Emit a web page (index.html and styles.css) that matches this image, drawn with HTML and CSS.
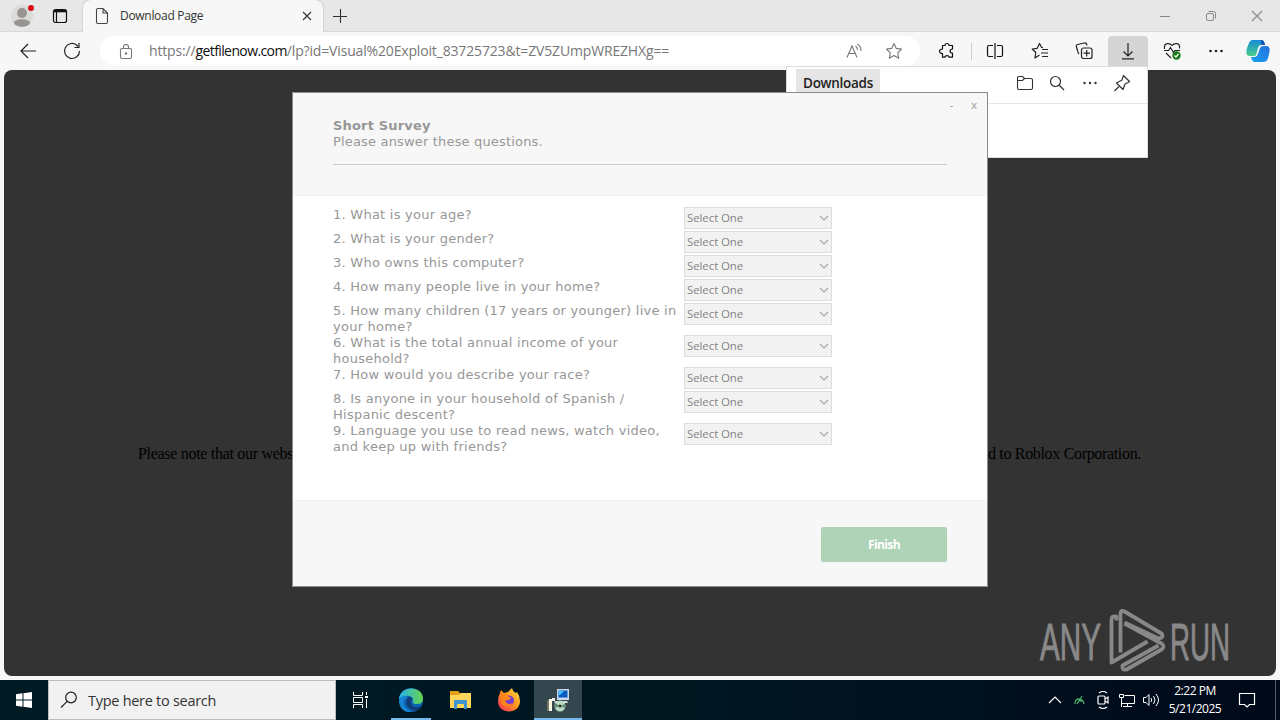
FILE: index.html
```html
<!DOCTYPE html>
<html lang="en">
<head>
<meta charset="utf-8">
<title>Download Page</title>
<link rel="stylesheet" href="styles.css">
</head>
<body>
<div class="screen">
  <header class="tabbar">
    <div class="profile"><svg width="26" height="26" viewBox="0 0 26 26"><circle cx="12" cy="13" r="11" fill="#dcdad8"/><circle cx="12" cy="10" r="5" fill="#979593"/><path d="M4 20c0-5 16-5 16 0-2 5-14 5-16 0z" fill="#979593"/><circle cx="21" cy="5" r="3" fill="#d80b18"/></svg></div>
    <div class="workspace"><svg width="16" height="16" viewBox="0 0 16 16" fill="none" stroke="#111" stroke-width="1.2"><rect x="1.5" y="1.5" width="13" height="13" rx="2"/><path d="M2 3h12" stroke-width="2.6"/><path d="M4.500 4v10"/></svg></div>
    <div class="tab">
      <svg width="14" height="18" viewBox="0 0 14 18" fill="none" stroke="#444" stroke-width="1.1"><path d="M1.5 3q0-1.5 1.5-1.5h5L12.500 6v9q0 1.500-1.500 1.500H3Q1.500 16.500 1.500 15zM8 1.500V6h4.500"/></svg>
      <span class="tab-title">Download Page</span>
      <svg class="tab-close" width="10" height="10" viewBox="0 0 10 10" stroke="#333" stroke-width="1.1"><path d="M1 1l8 8M9 1L1 9"/></svg>
    </div>
    <div class="newtab"><svg width="14" height="14" viewBox="0 0 14 14" stroke="#333" stroke-width="1.1"><path d="M0 7.500h14M7.500 0v14"/></svg></div>
    <div class="winbtns">
      <span><svg width="12" height="12" viewBox="0 0 12 12" fill="none" stroke="#888"><path d="M1 6.500h10"/></svg></span>
      <span><svg width="12" height="12" viewBox="0 0 12 12" fill="none" stroke="#888"><rect x="1.500" y="3.500" width="7" height="7" rx="1.500"/><path d="M3.500 1.500h5q2 0 2 2v5"/></svg></span>
      <span><svg width="12" height="12" viewBox="0 0 12 12" fill="none" stroke="#888" stroke-width="1.1"><path d="M1 1l10 10M11 1L1 11"/></svg></span>
    </div>
  </header>

  <nav class="toolbar">
    <div class="navbtn"><svg width="18" height="16" viewBox="0 0 18 16" fill="none" stroke="#222" stroke-width="1.2"><path d="M17 8H2M9 1L2 8l7 7"/></svg></div>
    <div class="navbtn"><svg width="18" height="18" viewBox="0 0 18 18" fill="none" stroke="#222" stroke-width="1.200"><path d="M16.500 9A7.500 7.500 0 1 1 13.500 3l1.500 1.500M16 1v4.500h-4.500"/></svg></div>
    <div class="address">
      <svg width="14" height="17" viewBox="0 0 14 17" fill="none" stroke="#777" stroke-width="1.1"><rect x="1.500" y="5.500" width="11" height="10" rx="1.500"/><path d="M4.500 5V4a2.500 2.500 0 0 1 5 0v1"/><circle cx="7" cy="10.500" r=".7" fill="#777"/></svg>
      <span class="url"><span>https://</span><b>getfilenow.com</b><span>/lp?id=Visual%20Exploit_83725723&amp;t=ZV5ZUmpWREZHXg==</span></span>
      <svg class="aloud" width="18" height="16" viewBox="0 0 18 16" fill="none" stroke="#777" stroke-width="1.1"><path d="M2 14.500L7 3l5 11.500M4 10.500h6M10.500 3q2 1.500 2 4M12.500 1q3.500 2.500 3.500 7"/></svg>
      <svg width="18" height="18" viewBox="0 0 18 18" fill="none" stroke="#777" stroke-width="1.1" stroke-linejoin="round"><path d="M9 1.500l2.300 4.900 5.200.7-3.800 3.700 1 5.400L9 13.600l-4.700 2.600 1-5.400L1.500 7.100l5.200-.7z"/></svg>
    </div>
    <div class="tool first"><svg width="18" height="18" viewBox="0 0 18 18" fill="none" stroke="#111" stroke-width="1.200" stroke-linejoin="round"><path d="M4.500 3.500h2.500c0-2.700 4-2.700 4 0h3.500V7c-3.200 0-3.200 4.200 0 4.200v4H11c0-2-4-2-4 0H4.500V11.500c-4 0-4-4.500 0-4.500z"/></svg></div>
    <i class="divider"></i>
    <div class="tool split"><svg width="18" height="16" viewBox="0 0 18 16" fill="none" stroke="#111" stroke-width="1.2"><path d="M7 2.500H3q-1.500 0-1.500 1.500v8q0 1.500 1.500 1.500h4M11 2.500h4q1.500 0 1.500 1.500v8q0 1.500-1.500 1.500h-4M9 0v16"/></svg></div>
    <div class="tool fav"><svg width="18" height="18" viewBox="0 0 18 18" fill="none" stroke="#222" stroke-width="1.200" stroke-linejoin="round"><path d="M12 5.500l-1.500-.2L8.500 1.500 6.200 6.300l-5 .7 3.600 3.500-.9 5.500L8.500 13M11 7.500h6M10 11h7M11 14.500h6"/></svg></div>
    <div class="tool"><svg width="18" height="18" viewBox="0 0 18 18" fill="none" stroke="#222" stroke-width="1.200"><path d="M4 12q-1-1-1.500-3.500L1.300 4.500Q1 3 2.500 2.500L9.500 1q1.500-.2 2 1l.5 1.500"/><rect x="6.500" y="6" width="10.500" height="10.500" rx="2"/><path d="M8.500 11.200h6.500M11.700 8v6.500"/></svg></div>
    <div class="tool active"><svg width="14" height="17" viewBox="0 0 14 17" fill="none" stroke="#222" stroke-width="1.200"><path d="M7 0v13M2.500 8.500L7 13l4.500-4.500M1 15.800h12"/></svg></div>
    <div class="tool"><svg width="18" height="18" viewBox="0 0 18 18" fill="none" stroke="#222" stroke-width="1.200"><path d="M1.500 7C.5 0 7 1 9 3.500 11 1 17.500 0 16.500 6.500M1 8.500h4.500l2-3 3 5 1.500-2h5M3 11l5 5"/><circle cx="13.500" cy="13.500" r="4.200" fill="#187b18" stroke="none"/><path d="M11.500 13.500l1.500 1.500 2.500-3" stroke="#fff"/></svg></div>
    <div class="tool"><svg width="14" height="4" viewBox="0 0 14 4" fill="#222"><circle cx="1.500" cy="2" r="1.300"/><circle cx="7" cy="2" r="1.300"/><circle cx="12.500" cy="2" r="1.300"/></svg></div>
    <div class="copilot"><svg width="24" height="24" viewBox="0 0 24 24"><defs><linearGradient id="ca" x1="0" y1="0" x2="0" y2="1"><stop offset="0" stop-color="#168bd8"/><stop offset="1" stop-color="#48cf8b"/></linearGradient><linearGradient id="cb" x1="1" y1="0" x2="0" y2="1"><stop offset="0" stop-color="#2870df"/><stop offset="1" stop-color="#13a1ef"/></linearGradient></defs><path d="M7 1h9q2 0 3 5h-4q-2 0-3 3l-2 7q-.5 1-2 1H3Q-1 16 1 9l2-5q1-3 4-3z" fill="url(#ca)"/><path d="M15 1q3 0 4 5h-4z" fill="#1455bc"/><path d="M17 7h4q4 1 2 8l-1 4q-1 4-5 4H9q-3 0-4-5h4q2 0 3-3l2-6q1-2 3-2z" fill="url(#cb)"/></svg></div>
  </nav>

  <main class="page">
    <div class="notice"><span class="notice-start">Please note that our webs</span><span class="notice-end">d to Roblox Corporation.</span></div>
    <svg class="watermark" width="200" height="68" viewBox="0 0 200 68" fill="none">
      <g class="brand"><text x="3" y="52" textLength="61" lengthAdjust="spacingAndGlyphs">ANY</text><text x="133" y="52" textLength="60" lengthAdjust="spacingAndGlyphs">RUN</text></g>
      <g stroke="#888" stroke-width="3.800" stroke-linejoin="round" transform="translate(-.5 -1.500)"><path d="M80 14V10q-5-1-5 3v43l36-21"/><path d="M84 46V7q0-4 4-2l37 22q3 4-3 5L88 16"/><path d="M88 17l37 20q4 3 0 6L90 63q-5 1-4-4l36-20"/></g>
    </svg>
  </main>

  <footer class="taskbar">
    <div class="start"><svg width="16" height="16" viewBox="0 0 16 16" fill="#fff"><path d="M0 2.200L6.500 1.300v6.200H0zM7.500 1.200L16 0v7.500H7.500zM0 8.500h6.500v6.200L0 13.800zM7.500 8.500H16V16l-8.500-1.200z"/></svg></div>
    <div class="search"><svg width="18" height="18" viewBox="0 0 18 18" fill="none" stroke="#222" stroke-width="1.200"><circle cx="11" cy="6.500" r="5.300"/><path d="M7.200 10.300L1 16.500"/></svg><span>Type here to search</span></div>
    <div class="app"><svg width="17" height="16" viewBox="0 0 17 16" fill="none" stroke="#fff"><path d="M1.500 0v3.500h9V0M1.500 16v-3.500h9V16M1.500 5.500v5h9v-5zM14.500 0v3M14.500 7v9"/><path d="M13 5h3" stroke-width="2"/></svg></div>
    <div class="app running"><svg width="26" height="26" viewBox="0 0 26 26"><defs><linearGradient id="eg"><stop offset="0" stop-color="#26afe9"/><stop offset="1" stop-color="#65d64c"/></linearGradient></defs><circle cx="13" cy="13" r="12" fill="#0c65b5"/><path d="M1 13C1-2 25-2 25 12q0 5-6 5-5 0-4-3 1-4-4-5Q4 8 1 13z" fill="url(#eg)"/><path d="M10 10q-5 9 4 13 4 2 8-2 2-2 1-2-8 3-10-3-.5-2 1-4-1-3-4-2z" fill="#123e78"/><path d="M10 10q-7 3-3 10 3 4 7 5Q2 26 1 14q3-7 9-4z" fill="#1685d3"/></svg></div>
    <div class="app"><svg width="22" height="20" viewBox="0 0 22 20"><path d="M0 1h8l2 2h11v15H0z" fill="#e4a019"/><path d="M0 5h9l2-2h10v15H0z" fill="#ffd65b"/><path d="M4 19v-8q0-1 1-1h11q1 0 1 1v8h-3v-4q0-1-1-1H8q-1 0-1 1v4z" fill="#3f94cf"/></svg></div>
    <div class="app firefox"><svg width="24" height="24" viewBox="0 0 24 24"><defs><linearGradient id="fx" x1="1" y1="0" x2="0" y2="1"><stop offset="0" stop-color="#ffe34c"/><stop offset=".45" stop-color="#ff9a1d"/><stop offset="1" stop-color="#ff265b"/></linearGradient></defs><path d="M3 5l1-3 3 3 4-1 4-4q1 4 4 5l1-1q3 4 3 9c0 14-22 14-22 0q0-4 2-8z" fill="url(#fx)"/><circle cx="12" cy="12.500" r="5" fill="#763bd0"/><path d="M4 7q5-3 7 1l3 2q-2 3-6 2 2 6 8 3-6 7-12 0z" fill="#ff861b"/></svg></div>
    <div class="app running selected"><svg width="24" height="24" viewBox="0 0 24 24"><path d="M11 1h12v11H11z" fill="#c8d8eb"/><path d="M12.500 2.500h9v7h-9z" fill="#085ac0"/><path d="M13 3h5l-4 4h-1z" fill="#3fc5ff"/><path d="M9 13h12l1 2H8z" fill="#d7d7d7"/><path d="M3 11h3v12H3z" fill="#f7f5df"/><path d="M1 12h2v11H1z" fill="#777666"/><path d="M6 10h3v3H6z" fill="#eee"/><circle cx="14" cy="18" r="5.500" fill="#b7dac4"/><path d="M14 18l-5-3v5zM14 18l5-2v4z" fill="#668e79"/><circle cx="14" cy="18" r="1.500" fill="#333"/></svg></div>
    <div class="tray">
      <span><svg width="14" height="8" viewBox="0 0 14 8" fill="none" stroke="#fff" stroke-width="1.200"><path d="M1 7l6-6 6 6"/></svg></span>
      <span><svg width="12" height="12" viewBox="0 0 12 12" fill="none" stroke="#48a967" stroke-width="1.300"><path d="M2 10q0-5 4-5t5 5M4 10l5-8M6 7h3"/></svg></span>
      <span><svg width="14" height="18" viewBox="0 0 14 18" fill="none" stroke="#fff" stroke-width="1.200"><rect x="2" y="5" width="7" height="8" rx="1"/><path d="M9 8l3-2v6l-3-2M3 2q4-3 8 0M3 16q4 3 8 0"/></svg></span>
      <span><svg width="18" height="16" viewBox="0 0 18 16" fill="none" stroke="#fff"><path d="M6.500 3.500h10v8h-13v-4M5 14.500h9M9.500 11.500v3M1.500 2.500h4v3h-4zM3.500 5v10"/></svg></span>
      <span><svg width="18" height="16" viewBox="0 0 18 16" fill="none" stroke="#fff"><path d="M1.500 5.500h2.500l3-3v11l-3-3H1.500zM9 6q1.500 2 0 4M11.500 4q3 4 0 8M14 2q5 6 0 12"/></svg></span>
      <div class="clock"><span>2:22 PM</span><span>5/21/2025</span></div>
      <div class="action"><svg width="18" height="18" viewBox="0 0 18 18" fill="none" stroke="#fff" stroke-width="1.200"><path d="M1.500 2.500h15v11h-5L9 16l-2.500-2.500h-5z"/></svg></div>
      <i class="peek"></i>
    </div>
  </footer>

  <aside class="downloads">
    <div class="dl-head"><span class="dl-title">Downloads</span>
      <div class="dl-icons">
        <span><svg width="18" height="16" viewBox="0 0 18 16" fill="none" stroke="#333" stroke-width="1.100"><path d="M1.500 3q0-1.500 1.500-1.500h3.500L8.500 3.500H15q1.500 0 1.500 1.500v8q0 1.500-1.500 1.500H3q-1.500 0-1.500-1.500zM1.500 5.500h5l2-2"/></svg></span>
        <span><svg width="16" height="16" viewBox="0 0 16 16" fill="none" stroke="#333" stroke-width="1.200"><circle cx="6.500" cy="6.500" r="5"/><path d="M10 10l5 5"/></svg></span>
        <span><svg width="14" height="4" viewBox="0 0 14 4" fill="#333"><circle cx="1.500" cy="2" r="1.200"/><circle cx="7" cy="2" r="1.200"/><circle cx="12.500" cy="2" r="1.200"/></svg></span>
        <span><svg width="18" height="18" viewBox="0 0 18 18" fill="none" stroke="#333" stroke-width="1.200" stroke-linejoin="round"><path d="M10.500 1.500l6 6-1.500 1-3 1.500-2 5.500L3.500 9 9 6l1-3zM6.500 12l-5 5"/></svg></span>
      </div>
    </div>
  </aside>

  <section class="dialog">
    <div class="dialog-head">
      <div class="dialog-ctl"><span>-</span><span>x</span></div>
      <div class="dialog-intro"><h1>Short Survey</h1><p>Please answer these questions.</p></div>
    </div>
    <div class="questions">
      <div class="row"><p>1. What is your age?</p><div class="select">Select One<svg class="chev" viewBox="0 0 10 6"><path d="M1 1l4 4 4-4"/></svg></div></div>
      <div class="row"><p>2. What is your gender?</p><div class="select">Select One<svg class="chev" viewBox="0 0 10 6"><path d="M1 1l4 4 4-4"/></svg></div></div>
      <div class="row"><p>3. Who owns this computer?</p><div class="select">Select One<svg class="chev" viewBox="0 0 10 6"><path d="M1 1l4 4 4-4"/></svg></div></div>
      <div class="row"><p>4. How many people live in your home?</p><div class="select">Select One<svg class="chev" viewBox="0 0 10 6"><path d="M1 1l4 4 4-4"/></svg></div></div>
      <div class="row"><p>5. How many children (17 years or younger) live in<br>your home?</p><div class="select">Select One<svg class="chev" viewBox="0 0 10 6"><path d="M1 1l4 4 4-4"/></svg></div></div>
      <div class="row"><p>6. What is the total annual income of your<br>household?</p><div class="select">Select One<svg class="chev" viewBox="0 0 10 6"><path d="M1 1l4 4 4-4"/></svg></div></div>
      <div class="row"><p>7. How would you describe your race?</p><div class="select">Select One<svg class="chev" viewBox="0 0 10 6"><path d="M1 1l4 4 4-4"/></svg></div></div>
      <div class="row"><p>8. Is anyone in your household of Spanish /<br>Hispanic descent?</p><div class="select">Select One<svg class="chev" viewBox="0 0 10 6"><path d="M1 1l4 4 4-4"/></svg></div></div>
      <div class="row"><p>9. Language you use to read news, watch video,<br>and keep up with friends?</p><div class="select">Select One<svg class="chev" viewBox="0 0 10 6"><path d="M1 1l4 4 4-4"/></svg></div></div>
    </div>
    <div class="dialog-foot"><button class="finish">Finish</button></div>
  </section>
</div>
</body>
</html>
```

FILE: styles.css
```css
* { box-sizing: border-box; }
body { margin: 0; font-family: "Open Sans", "Noto Sans", sans-serif; }
h1, p { margin: 0; }
svg { display: block; flex: none; }
.screen { position: relative; width: 1280px; height: 720px; overflow: hidden; display: flex; flex-direction: column; background: #f7f7f7; }

.tabbar { height: 32px; display: flex; background: #e7e7e7; border-bottom: 1px solid #d9d9d9; }
.profile { width: 44px; padding: 3px 0 0 10px; }
.workspace { width: 32px; display: flex; align-items: center; justify-content: center; }
.tab { width: 240px; height: 32px; margin-left: 7px; padding: 0 11px 0 12px; display: flex; align-items: center; background: #f7f7f7; border-radius: 8px 8px 0 0; box-shadow: 0 0 2px #aaa; clip-path: inset(0 -3px 0 -3px); }
.tab-title { margin-left: 11px; font-size: 12px; line-height: 16px; color: #333; white-space: nowrap; letter-spacing: -0.3px; }
.tab-close { margin-left: auto; }
.newtab { width: 34px; display: flex; align-items: center; justify-content: center; }
.winbtns { margin-left: auto; display: flex; }
.winbtns span { width: 46px; display: flex; align-items: center; justify-content: center; }

.toolbar { height: 38px; display: flex; align-items: center; padding-left: 6px; }
.navbtn { width: 44px; display: flex; justify-content: center; }
.address { width: 820px; height: 30px; margin-left: 6px; padding: 0 17px 0 19px; display: flex; align-items: center; background: #fff; border-radius: 15px; }
.url { margin-left: 16px; font-size: 14px; line-height: 20px; color: #777; white-space: nowrap; letter-spacing: -0.16px; }
.url b { color: #111; font-weight: 400; letter-spacing: -0.6px; }
.aloud { margin-left: auto; margin-right: 22px; }
.tool { width: 40px; height: 30px; margin-right: 4px; display: flex; align-items: center; justify-content: center; }
.first { margin-left: 7px; }
.divider { width: 1px; height: 17px; background: #ccc; margin-right: 3px; }
.split { margin-right: 5px; }
.active { background: #d5d5d5; border-radius: 4px 4px 0 0; }
.copilot { width: 40px; margin-left: -2px; display: flex; justify-content: center; }

.page { height: 606px; margin: 0 4px; background: #333; border-radius: 8px; display: flex; flex-direction: column; justify-content: space-between; }
.notice { display: flex; justify-content: space-between; padding: 374px 135px 0 134px; font: 16px/20px "Liberation Serif", serif; color: #000; white-space: nowrap; }
.notice-start { letter-spacing: -0.3px; }
.notice-end { letter-spacing: -0.33px; }
.watermark { margin: 0 39px 0 auto; overflow: visible; }
.brand text { font: 51px "Liberation Sans", sans-serif; fill: #888; stroke: #888; stroke-width: 1px; }

.taskbar { height: 40px; margin-top: 4px; display: flex; background: linear-gradient(90deg, #001b24, #001620 55%, #00091a); color: #fff; }
.start { width: 48px; display: flex; align-items: center; justify-content: center; }
.search { width: 288px; display: flex; align-items: center; padding-left: 11px; background: #f1f1f1; border: 1px solid #bdbdbd; color: #333; font-size: 14.500px; white-space: nowrap; }
.search span { margin-left: 10px; letter-spacing: -0.28px; }
.app { width: 49px; display: flex; align-items: center; justify-content: center; }
.app:nth-of-type(3) { width: 48px; }
.running { width: 40px; margin: 0 5px 0 7px; border-bottom: 2px solid #76b9ed; padding-top: 2px; }
.selected { width: 48px; margin: 0; background: #34464e; }
.firefox { padding-right: 2px; }
.tray { margin-left: auto; display: flex; align-items: center; }
.tray > span { width: 24px; display: flex; justify-content: center; }
.clock { width: 64px; display: flex; flex-direction: column; align-items: center; font-size: 12px; line-height: 18px; letter-spacing: -0.48px; }
.action { width: 40px; display: flex; justify-content: center; }
.peek { width: 1px; height: 40px; margin: 0 4px 0 8px; background: #56606b; }

.downloads { position: absolute; left: 786px; top: 66px; width: 362px; height: 92px; background: #fff; border: 1px solid #ddd; }
.dl-head { height: 37px; display: flex; justify-content: space-between; padding: 2px 9px 0; border-bottom: 1px solid #e5e5e5; }
.dl-title { width: 84px; height: 28px; background: #e5e5e5; text-align: center; font-size: 13.500px; line-height: 28px; font-weight: 600; color: #222; letter-spacing: -0.3px; }
.dl-icons { display: flex; align-items: center; height: 28px; }
.dl-icons span { width: 32.300px; display: flex; justify-content: center; }

.dialog { position: absolute; left: 292px; top: 92px; width: 696px; height: 495px; border: 1px solid #8b8b8b; background: #fff; color: #979797; display: flex; flex-direction: column; font: 13px/16px "DejaVu Sans", sans-serif; }
.dialog-head { height: 103px; padding: 4px 8px 0 40px; background: #f7f7f7; border-bottom: 1px solid #f1f1f1; }
.dialog-ctl { display: flex; justify-content: flex-end; gap: 18px; height: 21px; font: 11px/16px "Open Sans", sans-serif; padding-right: 2px; }
.dialog-intro { width: 614px; height: 47px; border-bottom: 1px solid #ccc; letter-spacing: 0.17px; }
.dialog-intro h1 { font-size: 13px; line-height: 16px; font-weight: 700; }
.questions { height: 304px; padding: 11px 40px 0; }
.row { display: flex; min-height: 24px; }
.row p { width: 351px; white-space: nowrap; letter-spacing: 0.25px; }
.select { width: 148px; height: 22px; padding: 0 2px; display: flex; align-items: center; justify-content: space-between; border: 1px solid #ddd; background: #f2f2f2; color: #858585; font: 11.500px/20px "Open Sans", sans-serif; letter-spacing: -0.1px; }
.chev { width: 10px; height: 6px; fill: none; stroke: #aaa; stroke-width: 1.200; }
.dialog-foot { flex: 1; display: flex; justify-content: flex-end; padding: 26px 40px 0; background: #f7f7f7; border-top: 1px solid #f1f1f1; }
.finish { width: 126px; height: 35px; padding: 0; border: 0; border-radius: 2px; background: #afd3b6; color: #fff; font: 700 12px "Open Sans", sans-serif; letter-spacing: -0.6px; }
```
